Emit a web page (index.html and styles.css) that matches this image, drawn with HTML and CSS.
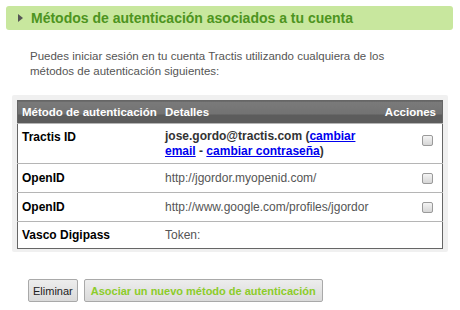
FILE: index.html
```html
<!DOCTYPE html>
<html lang="es">
<head>
	<meta charset="UTF-8">
	<title>Métodos de autenticación</title>
	<link rel="stylesheet" href="styles.css">
</head>
<body>
	<section class="auth">
		<h2 class="auth-title"><span class="arrow"></span>Métodos de autenticación asociados a tu cuenta</h2>
		<p class="intro">Puedes iniciar sesión en tu cuenta Tractis utilizando cualquiera de los métodos de autenticación siguientes:</p>

		<div class="table-wrap">
			<table class="methods">
				<thead>
					<tr>
						<th class="col-method">Método de autenticación</th>
						<th class="col-details">Detalles</th>
						<th class="col-actions">Acciones</th>
					</tr>
				</thead>
				<tbody>
					<tr class="tall">
						<td class="col-method">Tractis ID</td>
						<td class="col-details strong">jose.gordo@tractis.com (<a href="#">cambiar</a><br><a href="#">email</a> - <a href="#">cambiar contraseña</a>)</td>
						<td class="col-actions"><input type="checkbox"></td>
					</tr>
					<tr>
						<td class="col-method">OpenID</td>
						<td class="col-details">http://jgordor.myopenid.com/</td>
						<td class="col-actions"><input type="checkbox"></td>
					</tr>
					<tr>
						<td class="col-method">OpenID</td>
						<td class="col-details">http://www.google.com/profiles/jgordor</td>
						<td class="col-actions"><input type="checkbox"></td>
					</tr>
					<tr class="last">
						<td class="col-method">Vasco Digipass</td>
						<td class="col-details">Token:</td>
						<td class="col-actions"></td>
					</tr>
				</tbody>
			</table>
		</div>

		<div class="buttons">
			<button class="btn">Eliminar</button>
			<button class="btn btn-green">Asociar un nuevo método de autenticación</button>
		</div>
	</section>
</body>
</html>
```

FILE: styles.css
```css
body {
	margin: 0;
	background: #fff;
	font-family: "Liberation Sans", Arial, sans-serif;
}
section.auth {
	padding: 6px 7px 0 6px;
}
h2.auth-title {
	background-color: #c8e79e;
	border-radius: 3px;
	color: #4d9420;
	font-size: 14px;
	font-weight: bold;
	height: 24px;
	line-height: 24px;
	margin: 0;
	padding-left: 25px;
	position: relative;
}
h2.auth-title span.arrow {
	border-left: 5px solid #555;
	border-top: 4px solid transparent;
	border-bottom: 4px solid transparent;
	position: absolute;
	left: 12px; top: 8px;
}
p.intro {
	color: #555;
	font-size: 11.5px;
	line-height: 15px;
	margin: 19px 0 0 24px;
	width: 380px;
}
div.table-wrap {
	background-color: #f0f0f0;
	border-radius: 2px;
	margin: 16px 5px 0 6px;
	padding: 5px 5px 3px 5px;
}
table.methods {
	background: #fff;
	border: 1px solid #666;
	border-collapse: collapse;
	font-size: 12px;
	table-layout: fixed;
	width: 100%;
}
table.methods th {
	background: linear-gradient(#7a7a7a 0%, #727272 58%, #5c5c5c 58%, #5c5c5c 100%);
	color: #fff;
	font-size: 11.5px;
	font-weight: bold;
	height: 22px;
	padding: 0 4px;
	text-align: left;
	white-space: nowrap;
}
table.methods th.col-method {
	width: 135px;
}
table.methods th.col-actions {
	text-align: right;
	padding-right: 6px;
	width: 60px;
}
table.methods td {
	border-top: 1px solid #b5b5b5;
	color: #555;
	line-height: 14px;
	padding: 7px 4px;
	vertical-align: middle;
}
table.methods td.col-method {
	color: #000;
	font-weight: bold;
	white-space: nowrap;
}
table.methods td.strong {
	color: #333;
	font-weight: bold;
	line-height: 15px;
}
table.methods tr.tall td {
	vertical-align: top;
	padding: 5px 4px 4px 4px;
}
table.methods tr.tall td.col-method {
	padding-top: 6px;
}
table.methods tr.last td {
	padding: 6px 4px;
}
table.methods td a {
	color: #0000ee;
}
table.methods td.col-actions {
	text-align: right;
	padding-right: 9px;
}
table.methods tr.tall td.col-actions {
	padding: 9px 9px 0 4px;
}
table.methods td.col-actions input {
	appearance: none;
	background: linear-gradient(#f4f4f4, #d6d6d6);
	border: 1px solid #9a9a9a;
	border-radius: 2px;
	display: inline-block;
	margin: 0;
	vertical-align: middle;
	width: 11px; height: 11px;
}
div.buttons {
	display: flex;
	gap: 6px;
	margin: 27px 0 0 22px;
}
button.btn {
	background: linear-gradient(#ededed, #dadada);
	border: 1px solid #a9a9a9;
	border-radius: 2px;
	color: #222;
	font-family: "Liberation Sans", Arial, sans-serif;
	font-size: 11px;
	height: 23px;
	padding: 0 4px;
}
button.btn-green {
	color: #8ccc2a;
	font-weight: bold;
	padding: 0 6px;
}
```
